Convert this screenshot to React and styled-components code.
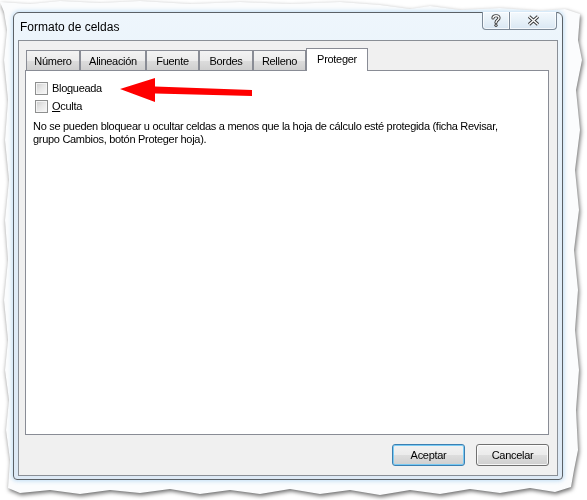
import React from "react";
import styled, { createGlobalStyle } from "styled-components";

const GlobalStyle = createGlobalStyle`
  html, body {
    margin: 0;
    padding: 0;
    background: #ffffff;
  }
  body {
    font-family: "Liberation Sans", Arial, sans-serif;
    color: #000;
  }
`;

const TORN = [
  "0px 2px", "30px 4px", "60px 1px", "100px 3px", "140px 1px", "190px 4px",
  "240px 2px", "290px 4px", "340px 2px", "380px 5px", "410px 9px", "430px 6px",
  "460px 10px", "500px 8px", "540px 11px", "565px 9px", "580px 14px",
  "578px 40px", "582px 60px", "576px 90px", "580px 130px", "575px 170px",
  "579px 210px", "574px 250px", "578px 290px", "575px 330px", "579px 370px",
  "576px 410px", "578px 450px", "574px 470px", "571px 487px",
  "555px 492px", "530px 488px", "500px 493px", "470px 489px", "440px 494px",
  "410px 490px", "380px 495px", "350px 490px", "320px 494px", "290px 489px",
  "260px 494px", "230px 490px", "200px 494px", "170px 489px", "140px 493px",
  "110px 490px", "80px 494px", "50px 490px", "20px 493px", "8px 488px",
  "10px 460px", "6px 430px", "9px 400px", "5px 370px", "8px 340px",
  "4px 300px", "8px 260px", "5px 220px", "9px 180px", "5px 140px",
  "8px 100px", "4px 60px", "7px 30px", "4px 12px",
].join(", ");

const Stage = styled.div`
  width: 587px;
  height: 500px;
  filter: drop-shadow(1px 2px 2px rgba(0, 0, 0, 0.6));
`;

const Paper = styled.div`
  width: 587px;
  height: 500px;
  box-sizing: border-box;
  padding: 12px 0 0 13px;
  background: #fbfcfd;
  clip-path: polygon(${TORN});
`;

const Dialog = styled.div`
  width: 550px;
  height: 468px;
  box-sizing: border-box;
  border: 1px solid #5b6166;
  border-radius: 6px 6px 4px 4px;
  background: linear-gradient(180deg, #eef6fc 0%, #e2eef8 40%, #dde9f5 100%);
  box-shadow: 0 0 4px 1px rgba(120, 185, 235, 0.45);
  display: flex;
  flex-direction: column;
`;

const TitleBar = styled.div`
  height: 27px;
  display: flex;
  align-items: flex-start;
  justify-content: space-between;
  padding-left: 6px;
`;

const Title = styled.div`
  font-size: 12px;
  line-height: 14px;
  margin-top: 7px;
  color: #000;
`;

const CaptionGroup = styled.div`
  display: flex;
  margin-top: -1px;
  margin-right: 5px;
`;

const CaptionButton = styled.div`
  width: ${(p) => p.$w}px;
  height: 18px;
  box-sizing: border-box;
  border: 1px solid #7d8a98;
  border-top: none;
  border-left: ${(p) => (p.$first ? "1px solid #7d8a98" : "none")};
  border-radius: ${(p) => (p.$first ? "0 0 0 4px" : "0 0 4px 0")};
  background: linear-gradient(180deg, #f4f9fd 0%, #e6f0f8 55%, #d9e7f3 100%);
  box-shadow: inset 0 0 0 1px rgba(255, 255, 255, 0.7);
  display: flex;
  align-items: center;
  justify-content: center;
`;

const Client = styled.div`
  flex: 1;
  margin: 0 4px 3px 4px;
  border: 1px solid #8a8f96;
  background: #f0f0f0;
  padding: 7px 8px 9px 6px;
  display: flex;
  flex-direction: column;
`;

const TabRow = styled.div`
  display: flex;
  align-items: flex-end;
  height: 22px;
  padding-left: 1px;
  position: relative;
  z-index: 1;
`;

const Tab = styled.div`
  width: ${(p) => p.$w}px;
  height: ${(p) => (p.$active ? 23 : 20)}px;
  margin-bottom: ${(p) => (p.$active ? -1 : 0)}px;
  box-sizing: border-box;
  border: 1px solid #898c95;
  border-bottom: none;
  background: ${(p) =>
    p.$active
      ? "#ffffff"
      : "linear-gradient(180deg, #f3f3f3 0%, #ebebeb 50%, #dddddd 51%, #cfcfcf 100%)"};
  font-size: 11px;
  letter-spacing: -0.3px;
  display: flex;
  align-items: center;
  justify-content: center;
  padding-bottom: ${(p) => (p.$active ? 3 : 0)}px;
  color: #000;
`;

const Panel = styled.div`
  position: relative;
  height: 365px;
  box-sizing: border-box;
  border: 1px solid #898c95;
  background: #ffffff;
  padding: 8px 7px 0 7px;
  font-size: 11px;
  letter-spacing: -0.3px;
`;

const CheckRow = styled.label`
  display: flex;
  align-items: center;
  gap: 4px;
  height: 18px;
  margin-left: 2px;
`;

const Box = styled.span`
  width: 13px;
  height: 13px;
  box-sizing: border-box;
  border: 1px solid #8e8f8f;
  box-shadow: inset 0 0 0 1px #f4f4f4;
  background: linear-gradient(135deg, #cbcbcb 0%, #e8e8e8 50%, #f8f8f8 100%);
`;

const Note = styled.p`
  margin: 5px 0 0 0;
  line-height: 13px;
  width: 490px;
`;

const Arrow = styled.svg`
  position: absolute;
  left: 94px;
  top: 6px;
`;

const ButtonRow = styled.div`
  display: flex;
  justify-content: flex-end;
  gap: 11px;
  margin-top: 9px;
`;

const Button = styled.div`
  width: 73px;
  height: 22px;
  box-sizing: border-box;
  border: 1px solid ${(p) => (p.$default ? "#3c7fb1" : "#707070")};
  border-radius: 3px;
  background: linear-gradient(180deg, #f2f2f2 0%, #ebebeb 50%, #dddddd 51%, #cfcfcf 100%);
  box-shadow: inset 0 0 0 1px
    ${(p) => (p.$default ? "rgba(110, 200, 245, 0.9)" : "rgba(255, 255, 255, 0.8)")};
  font-size: 11px;
  letter-spacing: -0.3px;
  display: flex;
  align-items: center;
  justify-content: center;
`;

const HelpGlyph = () => (
  <svg width="10" height="13" viewBox="0 0 10 13">
    <path
      d="M2 4 C2 1 8 1 8 4 C8 6 5 6 5 8.5"
      fill="none"
      stroke="#3c3c3c"
      strokeWidth="3.2"
      strokeLinecap="round"
    />
    <path
      d="M2 4 C2 1 8 1 8 4 C8 6 5 6 5 8.5"
      fill="none"
      stroke="#ffffff"
      strokeWidth="1.3"
      strokeLinecap="round"
    />
    <circle cx="5" cy="11.3" r="1.6" fill="#3c3c3c" />
    <circle cx="5" cy="11.3" r="0.7" fill="#ffffff" />
  </svg>
);

const CloseGlyph = () => (
  <svg width="13" height="11" viewBox="0 0 13 11">
    <path d="M2 1.5 L11 9.5 M11 1.5 L2 9.5" stroke="#3c3c3c" strokeWidth="3.4" />
    <path d="M2 1.5 L11 9.5 M11 1.5 L2 9.5" stroke="#ffffff" strokeWidth="1.4" />
  </svg>
);

const tabs = [
  { label: "Número", w: 54 },
  { label: "Alineación", w: 66 },
  { label: "Fuente", w: 53 },
  { label: "Bordes", w: 54 },
  { label: "Relleno", w: 53 },
  { label: "Proteger", w: 62, active: true },
];

export default function App() {
  return (
    <>
      <GlobalStyle />
      <Stage>
        <Paper>
          <Dialog>
            <TitleBar>
              <Title>Formato de celdas</Title>
              <CaptionGroup>
                <CaptionButton $w={28} $first>
                  <HelpGlyph />
                </CaptionButton>
                <CaptionButton $w={47}>
                  <CloseGlyph />
                </CaptionButton>
              </CaptionGroup>
            </TitleBar>
            <Client>
              <TabRow>
                {tabs.map((t) => (
                  <Tab key={t.label} $w={t.w} $active={t.active}>
                    {t.label}
                  </Tab>
                ))}
              </TabRow>
              <Panel>
                <CheckRow>
                  <Box />
                  <span>
                    Blo<u>q</u>ueada
                  </span>
                </CheckRow>
                <CheckRow>
                  <Box />
                  <span>
                    <u>O</u>culta
                  </span>
                </CheckRow>
                <Note>
                  No se pueden bloquear u ocultar celdas a menos que la hoja de cálculo esté
                  protegida (ficha Revisar, grupo Cambios, botón Proteger hoja).
                </Note>
                <Arrow width="133" height="26" viewBox="0 0 133 26">
                  <polygon
                    points="0,12 35,1 35,9.5 132,13 132,19 35,16.5 35,25"
                    fill="#ff0000"
                  />
                </Arrow>
              </Panel>
              <ButtonRow>
                <Button $default>Aceptar</Button>
                <Button>Cancelar</Button>
              </ButtonRow>
            </Client>
          </Dialog>
        </Paper>
      </Stage>
    </>
  );
}
